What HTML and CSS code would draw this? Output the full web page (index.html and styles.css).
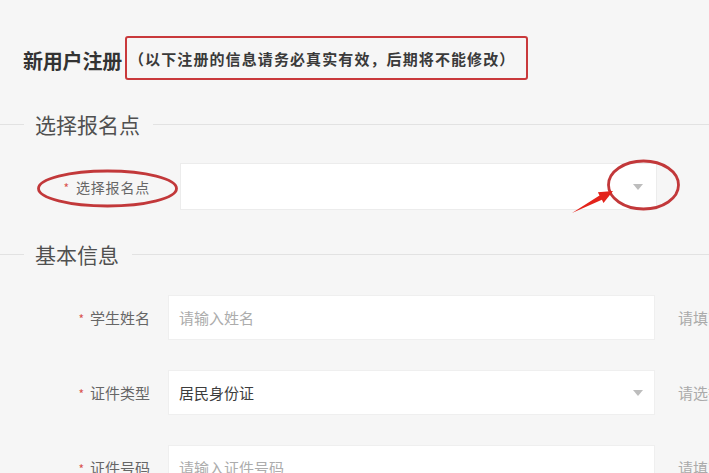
FILE: index.html
```html
<!DOCTYPE html>
<html lang="zh-CN">
<head>
<meta charset="utf-8">
<title>新用户注册</title>
<link rel="stylesheet" href="styles.css">
</head>
<body>
<div class="page">
  <div class="title-row">
    <h1 class="title">新用户注册</h1>
    <div class="note">（以下注册的信息请务必真实有效，后期将不能修改）</div>
  </div>

  <div class="section-head section-head-first">
    <span class="line-left"></span>
    <span class="section-text">选择报名点</span>
    <span class="line-right"></span>
  </div>

  <div class="site-row">
    <label class="site-label"><span class="req">*</span>选择报名点</label>
    <div class="select site-select">
      <span class="select-value"></span>
      <span class="caret"></span>
    </div>
  </div>

  <div class="section-head">
    <span class="line-left"></span>
    <span class="section-text">基本信息</span>
    <span class="line-right"></span>
  </div>

  <div class="form">
    <div class="form-row">
      <label class="form-label"><span class="req">*</span>学生姓名</label>
      <div class="field"><span class="placeholder">请输入姓名</span></div>
      <span class="help">请填写学生姓名</span>
    </div>
    <div class="form-row">
      <label class="form-label"><span class="req">*</span>证件类型</label>
      <div class="field select"><span class="value">居民身份证</span><span class="caret"></span></div>
      <span class="help">请选择证件类型</span>
    </div>
    <div class="form-row">
      <label class="form-label"><span class="req">*</span>证件号码</label>
      <div class="field"><span class="placeholder">请输入证件号码</span></div>
      <span class="help">请填写证件号码</span>
    </div>
  </div>

  <svg class="marks" width="709" height="473" viewBox="0 0 709 473" xmlns="http://www.w3.org/2000/svg">
    <ellipse cx="107.5" cy="188.5" rx="69" ry="17.5" fill="none" stroke="#c2383a" stroke-width="2.8"/>
    <ellipse cx="643.5" cy="185" rx="35" ry="24" fill="none" stroke="#c2383a" stroke-width="2.8"/>
    <polygon points="572,213 599.5,195.4 597.9,192.3 613,191 603.5,202.9 601.9,199.8" fill="#e3231b"/>
  </svg>
</div>
</body>
</html>
```

FILE: styles.css
```css
html, body {
  margin: 0;
  padding: 0;
  background: #f6f6f6;
  overflow: hidden;
}

body {
  font-family: "Noto Sans CJK SC", "Noto Sans", "Liberation Sans", sans-serif;
  color: #333;
}

.page {
  position: relative;
  width: 709px;
  height: 473px;
  padding-top: 36px;
  box-sizing: border-box;
}

.title-row {
  display: flex;
  align-items: center;
  padding-left: 23px;
  height: 44px;
}

.title {
  margin: 0;
  font-size: 20px;
  line-height: 24px;
  font-weight: bold;
  color: #333;
  padding-top: 6px;
  letter-spacing: -0.2px;
}

.note {
  margin-left: 3px;
  height: 44px;
  box-sizing: border-box;
  border: 2px solid #c9393b;
  border-radius: 3px;
  padding: 11px 11px 0 2px;
  font-size: 15px;
  line-height: 20px;
  font-weight: bold;
  color: #3a3a3a;
  letter-spacing: 1.1px;
  white-space: nowrap;
}

.section-head {
  display: flex;
  align-items: center;
  height: 28px;
  margin-top: 30px;
}

.line-left {
  width: 24px;
  height: 1px;
  background: #e2e2e2;
}

.line-right {
  flex: 1;
  height: 1px;
  background: #e2e2e2;
}

.section-text {
  margin: 0 13px 0 11px;
  font-size: 21px;
  line-height: 28px;
  color: #505050;
}

.site-row {
  display: flex;
  align-items: center;
  margin-top: 25px;
  height: 47px;
}

.site-label {
  width: 180px;
  flex: none;
  box-sizing: border-box;
  padding-right: 30px;
  text-align: right;
  font-size: 14px;
  color: #666;
  letter-spacing: 0.8px;
}

.req {
  color: #d9534f;
  font-size: 12px;
  margin-right: 6px;
}

.select {
  display: flex;
  align-items: center;
  justify-content: space-between;
}

.site-select {
  width: 477px;
  flex: none;
  height: 47px;
  box-sizing: border-box;
  background: #fff;
  border: 1px solid #ececec;
  padding: 0 13px 0 10px;
}

.caret {
  width: 0;
  height: 0;
  border-left: 5px solid transparent;
  border-right: 5px solid transparent;
  border-top: 6px solid #bdbdbd;
}

.form {
  margin-top: 27px;
  display: flex;
  flex-direction: column;
  gap: 30px;
}

.form-row {
  display: flex;
  align-items: center;
  height: 45px;
  white-space: nowrap;
}

.form-label {
  width: 168px;
  flex: none;
  box-sizing: border-box;
  padding-right: 18px;
  text-align: right;
  font-size: 15px;
  color: #666;
}

.field {
  width: 487px;
  flex: none;
  height: 45px;
  box-sizing: border-box;
  background: #fff;
  border: 1px solid #efefef;
  padding: 0 11px 0 10px;
  display: flex;
  align-items: center;
  font-size: 15px;
}

.field.select {
  justify-content: space-between;
}

.placeholder {
  color: #acacac;
}

.value {
  color: #3c3c3c;
}

.help {
  margin-left: 23px;
  font-size: 15px;
  color: #aaa;
}

.marks {
  position: absolute;
  left: 0;
  top: 0;
  pointer-events: none;
}
```
